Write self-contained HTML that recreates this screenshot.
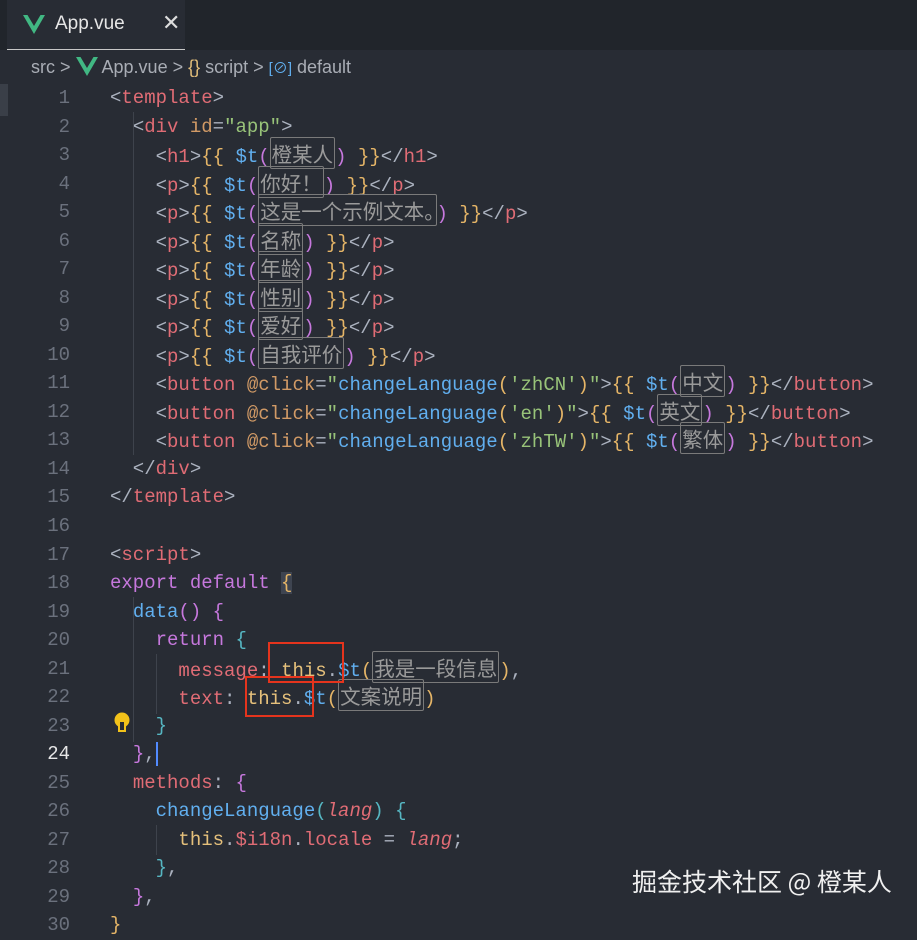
<!DOCTYPE html>
<html><head><meta charset="utf-8"><style>
body{margin:0;width:917px;height:922px;background:#282c34;overflow:hidden;position:relative;font-family:"Liberation Sans","Noto Sans CJK SC",sans-serif}
.tabbar{position:absolute;left:0;top:0;width:917px;height:50px;background:#21252b}
.tab{position:absolute;left:7px;top:0;width:178px;height:49px;background:#282c34;border-bottom:1px solid #c8c8c8}
.tab .t{position:absolute;left:48px;top:13px;font-size:19px;color:#e6e6e6}
.tab .x{position:absolute;left:155px;top:10px;font-size:22px;color:#ddd}
.crumb{position:absolute;left:31px;top:57px;font-size:18px;color:#a9adb5;white-space:nowrap}
.code{position:absolute;left:0;top:84px;width:917px;font-family:"Liberation Mono","Noto Sans CJK SC",monospace;font-size:19px}
.l{height:28.54px;line-height:28.54px;position:relative}
.n{position:absolute;left:0;width:70px;text-align:right;color:#6b717d}
.c{position:absolute;left:110px;color:#abb2bf;white-space:pre}
.tg{color:#e06c75}.p{color:#abb2bf}.at{color:#d19a66}.s{color:#98c379}.br{color:#e5b567}.f{color:#61afef}.pu{color:#c678dd}.th{color:#e5c07b}.tl{color:#56b6c2}.i{font-style:italic;color:#e06c75}
.z{color:#9a9a9a;border:1px solid #7a7a7a;border-radius:2px;font-family:"Noto Sans CJK SC",sans-serif;font-size:20.5px;padding:0 1px;line-height:24px}
.g{position:absolute;width:1px;background:#3e434c}
.red{position:absolute;border:2px solid #e5341d}
</style></head><body>
<div class="tabbar"></div>
<div class="tab"><svg style="position:absolute;left:16px;top:15px" width="22" height="19" viewBox="0 0 22 19"><path d="M0 0h4.5L11 11 17.5 0H22L11 19z" fill="#41b883"/></svg><span class="t">App.vue</span><span class="x">✕</span></div>
<div class="crumb">src &gt; <svg width="22" height="19" viewBox="0 0 22 19" style="vertical-align:-3px"><path d="M0 0h4.5L11 11 17.5 0H22L11 19z" fill="#41b883"/></svg> App.vue &gt; <span style="color:#e5c07b">{}</span> script &gt; <span style="color:#61afef;font-size:15px">[⊘]</span> default</div>
<div style="position:absolute;left:0;top:84px;width:8px;height:32px;background:#3a3f48"></div>
<div class="g" style="left:133px;top:112px;height:343px"></div>
<div class="g" style="left:133px;top:597px;height:145px"></div>
<div class="g" style="left:156px;top:654px;height:60px"></div>
<div class="g" style="left:156px;top:825px;height:30px"></div>
<div class="code"><div class="l"><span class="n">1</span><span class="c"><span class="p">&lt;</span><span class="tg">template</span><span class="p">&gt;</span></span></div><div class="l"><span class="n">2</span><span class="c">  <span class="p">&lt;</span><span class="tg">div</span> <span class="at">id</span>=<span class="s">"app"</span>&gt;</span></div><div class="l"><span class="n">3</span><span class="c">    &lt;<span class="tg">h1</span>&gt;<span class="br">{{</span> <span class="f">$t</span><span class="pu">(</span><span class="z">橙某人</span><span class="pu">)</span> <span class="br">}}</span>&lt;/<span class="tg">h1</span>&gt;</span></div><div class="l"><span class="n">4</span><span class="c">    &lt;<span class="tg">p</span>&gt;<span class="br">{{</span> <span class="f">$t</span><span class="pu">(</span><span class="z">你好！</span><span class="pu">)</span> <span class="br">}}</span>&lt;/<span class="tg">p</span>&gt;</span></div><div class="l"><span class="n">5</span><span class="c">    &lt;<span class="tg">p</span>&gt;<span class="br">{{</span> <span class="f">$t</span><span class="pu">(</span><span class="z">这是一个示例文本。</span><span class="pu">)</span> <span class="br">}}</span>&lt;/<span class="tg">p</span>&gt;</span></div><div class="l"><span class="n">6</span><span class="c">    &lt;<span class="tg">p</span>&gt;<span class="br">{{</span> <span class="f">$t</span><span class="pu">(</span><span class="z">名称</span><span class="pu">)</span> <span class="br">}}</span>&lt;/<span class="tg">p</span>&gt;</span></div><div class="l"><span class="n">7</span><span class="c">    &lt;<span class="tg">p</span>&gt;<span class="br">{{</span> <span class="f">$t</span><span class="pu">(</span><span class="z">年龄</span><span class="pu">)</span> <span class="br">}}</span>&lt;/<span class="tg">p</span>&gt;</span></div><div class="l"><span class="n">8</span><span class="c">    &lt;<span class="tg">p</span>&gt;<span class="br">{{</span> <span class="f">$t</span><span class="pu">(</span><span class="z">性别</span><span class="pu">)</span> <span class="br">}}</span>&lt;/<span class="tg">p</span>&gt;</span></div><div class="l"><span class="n">9</span><span class="c">    &lt;<span class="tg">p</span>&gt;<span class="br">{{</span> <span class="f">$t</span><span class="pu">(</span><span class="z">爱好</span><span class="pu">)</span> <span class="br">}}</span>&lt;/<span class="tg">p</span>&gt;</span></div><div class="l"><span class="n">10</span><span class="c">    &lt;<span class="tg">p</span>&gt;<span class="br">{{</span> <span class="f">$t</span><span class="pu">(</span><span class="z">自我评价</span><span class="pu">)</span> <span class="br">}}</span>&lt;/<span class="tg">p</span>&gt;</span></div><div class="l"><span class="n">11</span><span class="c">    &lt;<span class="tg">button</span> <span class="at">@click</span>=<span class="s">"</span><span class="f">changeLanguage</span><span class="br">(</span><span class="s">'zhCN'</span><span class="br">)</span><span class="s">"</span>&gt;<span class="br">{{</span> <span class="f">$t</span><span class="pu">(</span><span class="z">中文</span><span class="pu">)</span> <span class="br">}}</span>&lt;/<span class="tg">button</span>&gt;</span></div><div class="l"><span class="n">12</span><span class="c">    &lt;<span class="tg">button</span> <span class="at">@click</span>=<span class="s">"</span><span class="f">changeLanguage</span><span class="br">(</span><span class="s">'en'</span><span class="br">)</span><span class="s">"</span>&gt;<span class="br">{{</span> <span class="f">$t</span><span class="pu">(</span><span class="z">英文</span><span class="pu">)</span> <span class="br">}}</span>&lt;/<span class="tg">button</span>&gt;</span></div><div class="l"><span class="n">13</span><span class="c">    &lt;<span class="tg">button</span> <span class="at">@click</span>=<span class="s">"</span><span class="f">changeLanguage</span><span class="br">(</span><span class="s">'zhTW'</span><span class="br">)</span><span class="s">"</span>&gt;<span class="br">{{</span> <span class="f">$t</span><span class="pu">(</span><span class="z">繁体</span><span class="pu">)</span> <span class="br">}}</span>&lt;/<span class="tg">button</span>&gt;</span></div><div class="l"><span class="n">14</span><span class="c">  &lt;/<span class="tg">div</span>&gt;</span></div><div class="l"><span class="n">15</span><span class="c">&lt;/<span class="tg">template</span>&gt;</span></div><div class="l"><span class="n">16</span><span class="c"></span></div><div class="l"><span class="n">17</span><span class="c">&lt;<span class="tg">script</span>&gt;</span></div><div class="l"><span class="n">18</span><span class="c"><span class="pu">export default</span> <span class="br" style="background:#3e4450">{</span></span></div><div class="l"><span class="n">19</span><span class="c">  <span class="f">data</span><span class="pu">()</span> <span class="pu">{</span></span></div><div class="l"><span class="n">20</span><span class="c">    <span class="pu">return</span> <span class="tl">{</span></span></div><div class="l"><span class="n">21</span><span class="c">      <span class="tg">message</span>: <span class="th">this</span>.<span class="f">$t</span><span class="br">(</span><span class="z">我是一段信息</span><span class="br">)</span>,</span></div><div class="l"><span class="n">22</span><span class="c">      <span class="tg">text</span>: <span class="th">this</span>.<span class="f">$t</span><span class="br">(</span><span class="z">文案说明</span><span class="br">)</span></span></div><div class="l"><span class="n">23</span><span class="c">    <span class="tl">}</span></span></div><div class="l"><span class="n" style="color:#e6e6e6">24</span><span class="c">  <span class="pu">}</span>,<span style="display:inline-block;width:2px;height:24px;background:#528bff;vertical-align:middle"></span></span></div><div class="l"><span class="n">25</span><span class="c">  <span class="tg">methods</span>: <span class="pu">{</span></span></div><div class="l"><span class="n">26</span><span class="c">    <span class="f">changeLanguage</span><span class="tl">(</span><span class="i">lang</span><span class="tl">)</span> <span class="tl">{</span></span></div><div class="l"><span class="n">27</span><span class="c">      <span class="th">this</span>.<span class="tg">$i18n</span>.<span class="tg">locale</span> = <span class="i">lang</span>;</span></div><div class="l"><span class="n">28</span><span class="c">    <span class="tl">}</span>,</span></div><div class="l"><span class="n">29</span><span class="c">  <span class="pu">}</span>,</span></div><div class="l"><span class="n">30</span><span class="c"><span class="br">}</span></span></div></div>
<svg style="position:absolute;left:112px;top:711px" width="20" height="24" viewBox="0 0 20 24"><circle cx="10" cy="9" r="7.5" fill="#f2c21a"/><rect x="6" y="14" width="8" height="7" fill="#f2c21a"/><rect x="8" y="11" width="4" height="8" fill="#282c34"/></svg>
<div class="red" style="left:268px;top:642px;width:72px;height:37px"></div>
<div class="red" style="left:245px;top:676px;width:65px;height:37px"></div>
<div style="position:absolute;left:632px;top:863px;font-size:25px;color:#f0f0f0;font-family:'Noto Sans CJK SC',sans-serif;white-space:nowrap">掘金技术社区 @ 橙某人</div>
</body></html>
